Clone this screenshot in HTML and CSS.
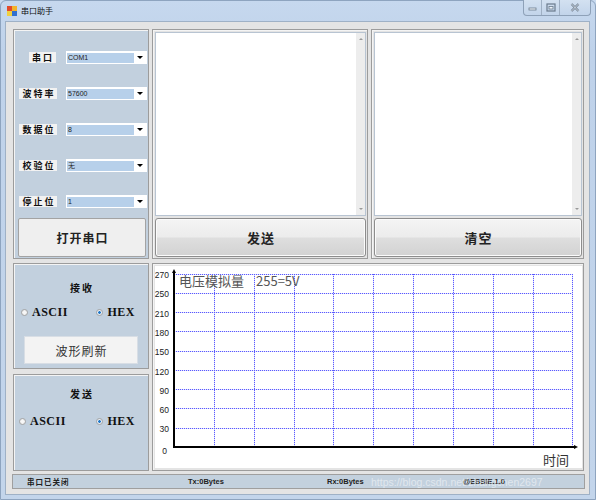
FILE: index.html
```html
<!DOCTYPE html>
<html>
<head>
<meta charset="utf-8">
<link rel="stylesheet" href="styles.css">
</head>
<body>
<div class="window">
  <div class="titlebar">
    <svg class="app-icon" width="10" height="10" viewBox="0 0 10 10">
      <rect x="0" y="0" width="5" height="5" fill="#e24a2a"/>
      <rect x="5" y="0" width="5" height="5" fill="#f3b32a"/>
      <rect x="0" y="5" width="5" height="5" fill="#f0d040"/>
      <rect x="5" y="5" width="5" height="5" fill="#2f6fd0"/>
    </svg>
    <span class="title">串口助手</span>
    <div class="controls">
      <span class="ctl ctl-min"><svg width="10" height="6" viewBox="0 0 10 6"><rect x="1" y="3" width="7" height="2" fill="#eef3f8" stroke="#6a7a8c" stroke-width="0.8"/></svg></span>
      <span class="ctl ctl-max"><svg width="10" height="9" viewBox="0 0 10 9"><rect x="1" y="1" width="8" height="7" fill="none" stroke="#6a7a8c" stroke-width="1.2"/><rect x="3" y="3.5" width="4" height="2.5" fill="#eef3f8" stroke="#6a7a8c" stroke-width="0.8"/></svg></span>
      <span class="ctl ctl-close"><svg width="10" height="9" viewBox="0 0 10 9"><path d="M1.5 1 L8.5 8 M8.5 1 L1.5 8" stroke="#6a7a8c" stroke-width="2.2"/><path d="M1.5 1 L8.5 8 M8.5 1 L1.5 8" stroke="#eef3f8" stroke-width="0.8"/></svg></span>
    </div>
  </div>
  <div class="client">
    <div class="layout">
      <div class="panel settings">
        <div class="field"><span class="lbl lbl2">串口</span><div class="combo"><span class="val">COM1</span><span class="arrow"></span></div></div>
        <div class="field"><span class="lbl">波特率</span><div class="combo"><span class="val">57600</span><span class="arrow"></span></div></div>
        <div class="field"><span class="lbl">数据位</span><div class="combo"><span class="val">8</span><span class="arrow"></span></div></div>
        <div class="field"><span class="lbl">校验位</span><div class="combo"><span class="val">无</span><span class="arrow"></span></div></div>
        <div class="field"><span class="lbl">停止位</span><div class="combo"><span class="val">1</span><span class="arrow"></span></div></div>
        <div class="btn btn-open">打开串口</div>
      </div>
      <div class="panel textpanel">
        <div class="textbox"><div class="scrollbar"><span class="sarrow up"></span><span class="sarrow down"></span></div></div>
        <div class="btn btn-aero">发送</div>
      </div>
      <div class="panel textpanel">
        <div class="textbox"><div class="scrollbar"><span class="sarrow up"></span><span class="sarrow down"></span></div></div>
        <div class="btn btn-aero">清空</div>
      </div>
      <div class="leftcol">
        <div class="panel recv">
          <div class="group-title">接收</div>
          <div class="radios">
            <span class="radio"><span class="dot"></span>ASCII</span>
            <span class="radio"><span class="dot on"></span>HEX</span>
          </div>
          <div class="btn btn-refresh">波形刷新</div>
        </div>
        <div class="panel send">
          <div class="group-title group-title-send">发送</div>
          <div class="radios radios-send">
            <span class="radio"><span class="dot"></span>ASCII</span>
            <span class="radio"><span class="dot on"></span>HEX</span>
          </div>
        </div>
      </div>
      <div class="panel chartpanel">
        <svg class="chart" width="427" height="202" viewBox="0 0 427 202">
          <g stroke="#5a5aff" stroke-width="1" stroke-dasharray="1.2 0.8" fill="none">
            <line x1="19" y1="8.5" x2="417" y2="8.5"/>
            <line x1="19" y1="27.5" x2="417" y2="27.5"/>
            <line x1="19" y1="46.5" x2="417" y2="46.5"/>
            <line x1="19" y1="65.5" x2="417" y2="65.5"/>
            <line x1="19" y1="85.5" x2="417" y2="85.5"/>
            <line x1="19" y1="104.5" x2="417" y2="104.5"/>
            <line x1="19" y1="123.5" x2="417" y2="123.5"/>
            <line x1="19" y1="142.5" x2="417" y2="142.5"/>
            <line x1="19" y1="162.5" x2="417" y2="162.5"/>
            <line x1="59.5" y1="8" x2="59.5" y2="181"/>
            <line x1="99.5" y1="8" x2="99.5" y2="181"/>
            <line x1="139.5" y1="8" x2="139.5" y2="181"/>
            <line x1="178.5" y1="8" x2="178.5" y2="181"/>
            <line x1="218.5" y1="8" x2="218.5" y2="181"/>
            <line x1="258.5" y1="8" x2="258.5" y2="181"/>
            <line x1="298.5" y1="8" x2="298.5" y2="181"/>
            <line x1="338.5" y1="8" x2="338.5" y2="181"/>
            <line x1="378.5" y1="8" x2="378.5" y2="181"/>
            <line x1="417.5" y1="8" x2="417.5" y2="181"/>
          </g>
          <g stroke="#000" stroke-width="2" fill="none">
            <line x1="19" y1="5" x2="19" y2="182"/>
            <line x1="18" y1="181" x2="420" y2="181"/>
          </g>
          <path d="M19 3 L17 7 L21 7 Z" fill="#000"/>
          <path d="M423 181 L419 179 L419 183 Z" fill="#000"/>
          <g class="ylab" text-anchor="end">
            <text x="14" y="12">270</text>
            <text x="14" y="31">250</text>
            <text x="14" y="51">210</text>
            <text x="14" y="70">180</text>
            <text x="14" y="89">150</text>
            <text x="14" y="109">120</text>
            <text x="14" y="128">90</text>
            <text x="14" y="147">60</text>
            <text x="14" y="166">30</text>
            <text x="12" y="188">0</text>
          </g>
          <text class="ctitle" x="24" y="20">电压模拟量</text>
          <text class="ctitle" x="101" y="20">255=5V</text>
          <text class="xlab" x="388" y="199">时间</text>
        </svg>
      </div>
    </div>
    <div class="status">
      <span class="st st1">串口已关闭</span>
      <span class="st st2">Tx:0Bytes</span>
      <span class="st st3">Rx:0Bytes</span>
      <span class="st st4">@ESSIE.1.0</span>
      <span class="watermark">https://blog.csdn.net/zhangchen2697</span>
    </div>
  </div>
</div>
</body>
</html>
```

FILE: styles.css
```css
html, body {
  margin: 0;
  padding: 0;
  background: #c8d9ee;
}
body {
  width: 596px;
  height: 500px;
  overflow: hidden;
  font-family: "Liberation Sans", "Noto Sans CJK SC", sans-serif;
}
.window {
  width: 596px;
  height: 500px;
  box-sizing: border-box;
  border: 1px solid #8ea4bf;
  border-radius: 6px 6px 0 0;
  background: linear-gradient(180deg, #c6d8ee 0%, #bfd2ea 10%, #c3d5eb 100%);
}
.titlebar {
  height: 20px;
  display: flex;
  align-items: flex-start;
}
.app-icon {
  margin: 5px 0 0 6px;
}
.title {
  margin: 4px 0 0 4px;
  font-family: "Noto Sans CJK SC", sans-serif;
  font-size: 8px;
  line-height: 12px;
  color: #111;
}
.controls {
  margin-left: auto;
  margin-right: 4px;
  margin-top: -1px;
  display: flex;
  height: 15px;
  border: 1px solid #8ea1b8;
  border-top: none;
  border-radius: 0 0 4px 4px;
  background: linear-gradient(180deg, #d3e1f1, #c2d4ea);
}
.ctl {
  display: flex;
  align-items: center;
  justify-content: center;
  height: 15px;
}
.ctl-min { width: 17px; border-right: 1px solid #9fb0c4; }
.ctl-max { width: 17px; border-right: 1px solid #9fb0c4; }
.ctl-close { width: 30px; }

.client {
  margin: 0 5px 0 4px;
  height: 474px;
  box-sizing: border-box;
  border: 1px solid #9fb1c6;
  background: #e4e4e4;
  padding: 7px 0 0 7px;
}
.layout {
  display: grid;
  grid-template-columns: 136px 216px 213px;
  grid-template-rows: 230px 208px;
  column-gap: 3px;
  row-gap: 4px;
}
.panel {
  box-sizing: border-box;
  border: 1px solid #9c9c9c;
  box-shadow: inset 1px 1px 0 #f4f4f4;
}
.settings {
  background: #c2d0de;
  padding: 21px 0 0 2px;
}
.field {
  display: flex;
  align-items: center;
  height: 13px;
  margin-bottom: 23px;
}
.field:nth-child(5) { margin-bottom: 10px; }
.lbl {
  width: 44px;
  display: flex;
  justify-content: center;
  font-family: "Noto Sans CJK SC", sans-serif;
  font-weight: 700;
  font-size: 9px;
  line-height: 11px;
  letter-spacing: 2px;
  text-indent: 2px;
  color: #111;
}
.field .lbl {
  background: linear-gradient(#f2f2f2, #f2f2f2) center / 38px 11px no-repeat;
}
.field .lbl2 {
  background: linear-gradient(#f2f2f2, #f2f2f2) center / 27px 11px no-repeat;
  margin-left: 4px;
  margin-right: -4px;
}
.combo {
  margin-left: 6px;
  width: 81px;
  height: 13px;
  background: #fff;
  display: flex;
  align-items: center;
  box-sizing: border-box;
  padding: 1px;
}
.val {
  flex: 0 0 66px;
  height: 10px;
  background: #b7d0ea;
  font-size: 7px;
  line-height: 10px;
  padding-left: 1px;
  color: #222;
  font-family: "Liberation Sans", "Noto Sans CJK SC", sans-serif;
}
.arrow {
  margin-left: auto;
  margin-right: 3px;
  width: 0;
  height: 0;
  border-left: 3px solid transparent;
  border-right: 3px solid transparent;
  border-top: 3px solid #000;
}
.btn {
  display: flex;
  align-items: center;
  justify-content: center;
  box-sizing: border-box;
  font-family: "Noto Sans CJK SC", sans-serif;
  font-weight: 700;
  color: #222;
}
.btn-open {
  margin-left: 2px;
  width: 128px;
  height: 39px;
  background: #efefef;
  border: 1px solid #a3a3a3;
  border-radius: 2px;
  font-size: 12px;
  letter-spacing: 1px;
  text-indent: 1px;
}
.textpanel {
  background: #e4e4e4;
  padding: 2px 1px 0 2px;
}
.textbox {
  height: 184px;
  background: #fff;
  border: 1px solid #b8c4d2;
  box-sizing: border-box;
  display: flex;
  justify-content: flex-end;
}
.scrollbar {
  width: 9px;
  background: #ededed;
  display: flex;
  flex-direction: column;
  justify-content: space-between;
  align-items: center;
  padding: 5px 0;
  box-sizing: border-box;
}
.sarrow {
  width: 0;
  height: 0;
  border-left: 2px solid transparent;
  border-right: 2px solid transparent;
}
.sarrow.up { border-bottom: 2px solid #999; }
.sarrow.down { border-top: 2px solid #999; }
.btn-aero {
  margin-top: 2px;
  height: 39px;
  border: 1px solid #8d8d8d;
  border-radius: 3px;
  background: linear-gradient(180deg, #f4f4f4 0%, #ececec 48%, #dedede 52%, #d2d2d2 100%);
  box-shadow: inset 0 0 0 1px #fbfbfb;
  font-size: 13px;
  letter-spacing: 1px;
  text-indent: 1px;
}
.leftcol {
  display: flex;
  flex-direction: column;
  gap: 5px;
}
.recv, .send {
  background: #c2d0de;
  display: flex;
  flex-direction: column;
  align-items: center;
}
.recv { height: 106px; }
.send { height: 97px; }
.group-title {
  margin-top: 18px;
  font-family: "Noto Sans CJK SC", sans-serif;
  font-weight: 700;
  font-size: 10px;
  line-height: 12px;
  letter-spacing: 2px;
  text-indent: 2px;
  color: #111;
}
.group-title-send {
  margin-top: 13px;
}
.radios {
  margin-top: 11px;
  width: 100%;
  display: flex;
  justify-content: space-between;
  padding: 0 13px 0 7px;
  box-sizing: border-box;
}
.radios-send {
  margin-top: 14px;
  padding-left: 5px;
}
.radio {
  display: flex;
  align-items: center;
  font-family: "Liberation Serif", serif;
  font-weight: 700;
  font-size: 12px;
  line-height: 14px;
  color: #111;
  letter-spacing: 0.5px;
}
.dot {
  width: 7px;
  height: 7px;
  border-radius: 50%;
  border: 1px solid #a5a5a5;
  background: radial-gradient(circle, #f7f7f7 30%, #e2e2e2 100%);
  margin-right: 4px;
  box-sizing: border-box;
}
.dot.on {
  background: radial-gradient(circle, #1f78c8 0 30%, #e7eef6 45%, #dde4ec 100%);
}
.btn-refresh {
  margin-top: 17px;
  width: 114px;
  height: 28px;
  background: #f3f3f3;
  border: 1px solid #d8dee5;
  font-family: "Noto Sans CJK SC", sans-serif;
  font-weight: 400;
  font-size: 12px;
  letter-spacing: 1px;
  text-indent: 1px;
  color: #333;
}
.chartpanel {
  grid-column: 2 / 4;
  background: #e4e4e4;
  padding: 2px;
}
.chart {
  display: block;
  background: #fff;
}
.ylab text {
  font-family: "Liberation Sans", sans-serif;
  font-size: 8.5px;
  fill: #222;
}
.ctitle {
  font-family: "Noto Sans CJK SC", sans-serif;
  font-size: 13px;
  fill: #555;
}
.xlab {
  font-family: "Noto Sans CJK SC", sans-serif;
  font-size: 13px;
  fill: #333;
}
.status {
  position: relative;
  margin: 3px 0 0 -1px;
  width: 573px;
  height: 15px;
  box-sizing: border-box;
  border: 1px solid #9f9f9f;
  background: #c3d1de;
  display: flex;
  align-items: center;
  font-size: 7.5px;
  font-weight: 700;
  color: #222;
}
.st { display: block; white-space: nowrap; }
.st1 {
  margin-left: 14px;
  width: 161px;
  font-family: "Noto Sans CJK SC", sans-serif;
  font-size: 7.5px;
  letter-spacing: 1px;
}
.st2 { width: 139px; }
.st3 { width: 136px; }
.watermark {
  position: absolute;
  left: 358px;
  top: 1px;
  font-size: 10.5px;
  font-weight: 400;
  color: rgba(255, 255, 255, 0.5);
  white-space: nowrap;
}
```
